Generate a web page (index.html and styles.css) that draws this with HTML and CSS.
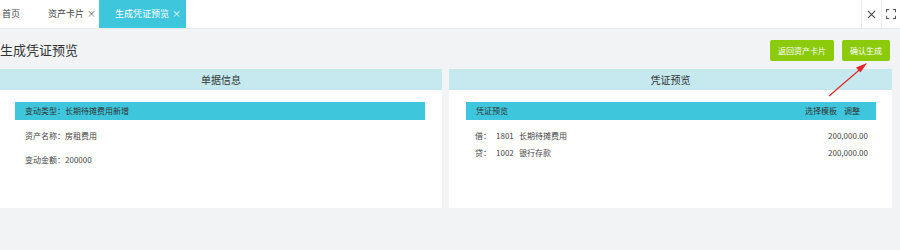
FILE: index.html
```html
<!DOCTYPE html>
<html lang="zh">
<head>
<meta charset="utf-8">
<link rel="stylesheet" href="styles.css">
</head>
<body>
<div class="tabbar">
  <div class="tabs">
    <div class="tab home">首页</div>
    <div class="tab">资产卡片 <span class="x">×</span></div>
    <div class="tab active">生成凭证预览 <span class="x">×</span></div>
  </div>
  <div class="tools">
    <div class="tool">
      <svg width="9" height="9" viewBox="0 0 10 10"><path d="M1 1L9 9M9 1L1 9" stroke="#444" stroke-width="1.2"/></svg>
    </div>
    <div class="tool">
      <svg width="10" height="10" viewBox="0 0 11 11" fill="none" stroke="#555" stroke-width="1.2"><path d="M0.6 3.5V0.6H3.5M7.5 0.6H10.4V3.5M10.4 7.5V10.4H7.5M3.5 10.4H0.6V7.5"/></svg>
    </div>
  </div>
</div>
<div class="main">
  <div class="titlerow">
    <h1 class="title">生成凭证预览</h1>
    <div class="btns">
      <button class="btn">返回资产卡片</button>
      <button class="btn">确认生成</button>
    </div>
  </div>
  <div class="panels">
    <div class="panel">
      <div class="phead">单据信息</div>
      <div class="pbody left">
        <div class="bar"><span>变动类型：长期待摊费用新增</span></div>
        <div class="row r1">资产名称：房租费用</div>
        <div class="row r2">变动金额：200000</div>
      </div>
    </div>
    <div class="panel">
      <div class="phead">凭证预览</div>
      <div class="pbody right">
        <div class="bar"><span>凭证预览</span><span class="acts"><span>选择模板</span><span>调整</span></span></div>
        <div class="vrow v1"><span class="dc">借：</span><span class="code">1801</span><span class="name">长期待摊费用</span><span class="amt">200,000.00</span></div>
        <div class="vrow v2"><span class="dc">贷：</span><span class="code">1002</span><span class="name">银行存款</span><span class="amt">200,000.00</span></div>
      </div>
    </div>
  </div>
</div>
<svg class="arrow" width="60" height="50" viewBox="0 0 60 50">
  <path d="M10 44L42 16.5" stroke="#e8262a" stroke-width="1.2"/>
  <path d="M48 11L37 15.5L41.5 20.5Z" fill="#e8262a"/>
</svg>
</body>
</html>
```
FILE: styles.css
```css
* { box-sizing: border-box; }
html, body { margin: 0; padding: 0; }
body {
  width: 900px;
  height: 250px;
  background: #f2f3f5;
  font-family: "Noto Sans CJK SC", "Microsoft YaHei", sans-serif;
  font-size: 8px;
  color: #555;
  position: relative;
  overflow: hidden;
}
.tabbar {
  height: 29px;
  background: #fff;
  border-bottom: 1px solid #e8e9ec;
  display: flex;
  justify-content: space-between;
}
.tabs { display: flex; height: 28px; }
.tab {
  height: 28px;
  line-height: 28px;
  white-space: nowrap;
  color: #444;
  font-size: 9px;
  padding: 0 3px 0 0;
}
.tab.home { padding: 0 28px 0 2px; }
.tab .x { color: #666; margin-left: 1px; }
.tab.active {
  background: #3ec6dc;
  color: #fff;
  padding: 0 5px 0 16px;
}
.tab.active .x { color: #fff; }
.tools { display: flex; height: 28px; }
.tool {
  width: 20px;
  height: 28px;
  display: flex;
  align-items: center;
  justify-content: center;
  border-left: 1px solid #ececec;
}
.tool:last-child { width: 19px; }
.main { padding-right: 8px; }
.titlerow {
  height: 40px;
  display: flex;
  align-items: center;
  justify-content: space-between;
  padding-top: 2px;
}
.title {
  margin: 0;
  font-size: 13px;
  font-weight: normal;
  color: #333;
  line-height: 18px;
  margin-top: -1px;
}
.btns { display: flex; gap: 8px; margin-right: 2px; }
.btn {
  border: none;
  background: #8cca0c;
  color: #fff;
  font-family: inherit;
  font-size: 8px;
  height: 21px;
  padding: 0 8px;
  border-radius: 2px;
  line-height: 21px;
}
.panels {
  display: grid;
  grid-template-columns: 442px 443px;
  gap: 7px;
}
.phead {
  height: 21px;
  line-height: 21px;
  background: #c5e9ef;
  text-align: center;
  color: #333;
  font-size: 10px;
}
.pbody {
  background: #fff;
  height: 118px;
  padding-top: 12px;
}
.pbody.left { padding-left: 15px; padding-right: 17px; }
.pbody.right { padding-left: 17px; padding-right: 16px; }
.bar {
  height: 18px;
  line-height: 18px;
  background: #3ec6dc;
  color: #333;
  font-size: 8px;
  padding: 0 16px 0 10px;
  display: flex;
  justify-content: space-between;
}
.acts { display: flex; gap: 7px; }
.row {
  padding-left: 10px;
  font-size: 8px;
  color: #444;
  line-height: 12px;
}
.r1 { margin-top: 10px; }
.r2 { margin-top: 12px; }
.vrow {
  display: flex;
  padding-left: 9px;
  padding-right: 8px;
  font-size: 8px;
  color: #444;
  line-height: 12px;
}
.v1 { margin-top: 10px; }
.v2 { margin-top: 5px; }
.dc { width: 21px; }
.code { width: 23px; }
.name { flex: 1; }
.amt { text-align: right; }
.arrow {
  position: absolute;
  left: 819px;
  top: 52px;
}
```
